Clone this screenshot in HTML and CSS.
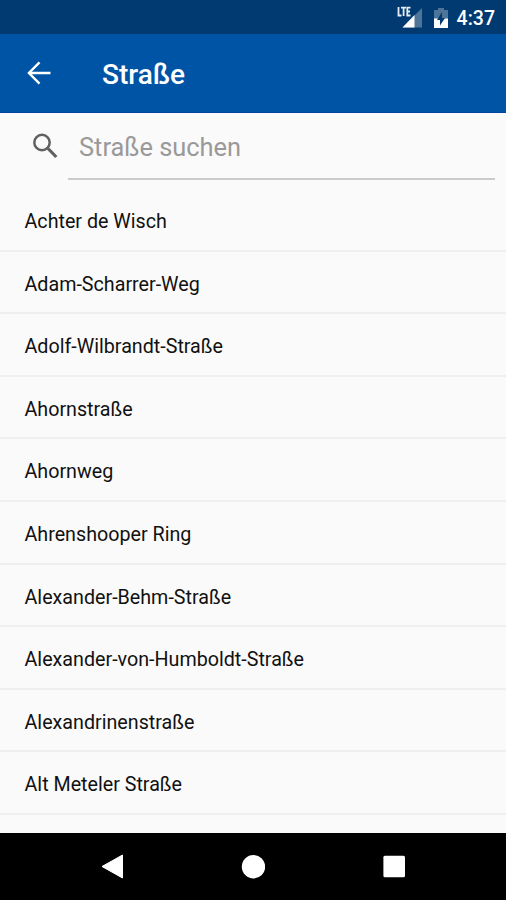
FILE: index.html
```html
<!DOCTYPE html>
<html lang="de">
<head>
<meta charset="utf-8">
<title>Straße</title>
<link rel="stylesheet" href="styles.css">
</head>
<body>
<div class="status-bar">
  <svg class="signal" width="27" height="22" viewBox="0 0 27 22">
    <path d="M25 2V21.500H5.500Z" fill="#4d7599"/>
    <path d="M17.500 9V21.500H5.500Z" fill="#fff"/>
    <rect width="14.500" height="11.500" fill="#003a70"/>
    <path d="M1.500 1V9.500H4.500M4 1.700H9M6.600 1.700V10M13.500 1.700H10.300V9.500H13.500M10.500 5.500H13" fill="none" stroke="#e6edf4" stroke-width="1.800"/>
  </svg>
  <svg class="battery" width="14" height="20" viewBox="0 0 14 20">
    <path d="M4 0H10V2H14V20H0V2H4Z" fill="#4d7599"/>
    <path d="M0 10.500H14V20H0Z" fill="#fff"/>
    <path d="M8 4V10H11L6 17.500V12H3Z" fill="#003a70"/>
  </svg>
  <span class="clock">4:37</span>
</div>
<header class="app-bar">
  <svg class="back" width="24" height="24" viewBox="0 0 24 24" fill="none" stroke="#fff" stroke-width="2.400">
    <path d="M12.500 1.300L1.900 12L12.500 22.700M2 12H23.500"/>
  </svg>
  <h1 class="title">Straße</h1>
</header>
<main class="content">
  <div class="search">
    <svg class="search-icon" width="26" height="26" viewBox="0 0 26 26" fill="none" stroke="#606060">
      <circle cx="9" cy="9.500" r="7.700" stroke-width="2.500"/>
      <path d="M15 15.500L23.300 24" stroke-width="3.200"/>
    </svg>
    <div class="field">Straße suchen</div>
  </div>
  <ul class="list">
    <li>Achter de Wisch</li>
    <li>Adam-Scharrer-Weg</li>
    <li>Adolf-Wilbrandt-Straße</li>
    <li>Ahornstraße</li>
    <li>Ahornweg</li>
    <li>Ahrenshooper Ring</li>
    <li>Alexander-Behm-Straße</li>
    <li>Alexander-von-Humboldt-Straße</li>
    <li>Alexandrinenstraße</li>
    <li>Alt Meteler Straße</li>
  </ul>
</main>
<nav class="nav-bar">
  <svg width="24" height="26" viewBox="0 0 24 26"><path d="M22.500 2V25L2 13.500Z" fill="#fff" stroke="#fff" stroke-linejoin="round"/></svg>
  <svg width="24" height="26" viewBox="0 0 24 26"><circle cx="12.500" cy="13.700" r="11.700" fill="#fff"/></svg>
  <svg width="24" height="26" viewBox="0 0 24 26"><rect x="1.400" y="2.700" width="21.600" height="21.600" rx="1.500" fill="#fff"/></svg>
</nav>
</body>
</html>
```
FILE: styles.css
```css
* { box-sizing: border-box; }
body {
  margin: 0;
  height: 900px;
  display: flex;
  flex-direction: column;
  overflow: hidden;
  font-family: Roboto, sans-serif;
  background: #fafafa;
}
.status-bar {
  flex: none;
  height: 34px;
  display: flex;
  align-items: flex-start;
  justify-content: flex-end;
  padding: 6px 11px 0 0;
  background: #003a70;
  color: #fff;
}
.battery { margin: 2px 9px 0 10px; }
.clock { font-size: 19.500px; font-weight: 500; line-height: 25px; }
.app-bar {
  flex: none;
  height: 79px;
  display: flex;
  align-items: center;
  padding-left: 27px;
  background: #0054a6;
  border-bottom: 1px solid #0044a0;
  color: #fff;
}
.back { margin-right: 51px; }
.title { margin: 4px 0 0; font-size: 28px; font-weight: 500; line-height: 32px; }
.content { flex: 1; min-height: 0; overflow: hidden; }
.search { height: 76px; display: flex; padding-right: 11px; }
.search-icon { margin: 20px 9px 0 33px; }
.field {
  flex: 1;
  height: 67px;
  padding: 18px 0 0 11px;
  border-bottom: 2px solid #cbcbcb;
  color: #999;
  font-size: 25.400px;
  line-height: 32px;
}
.list { margin: 0; padding: 0; list-style: none; }
.list li {
  height: 62.6px;
  padding: 2px 24.500px 0;
  border-bottom: 2px solid #efefef;
  color: #111;
  font-size: 19.700px;
  line-height: 62px;
}
.nav-bar {
  flex: none;
  height: 67px;
  display: flex;
  justify-content: center;
  gap: 117px;
  padding-top: 20px;
  background: #000;
}
```
